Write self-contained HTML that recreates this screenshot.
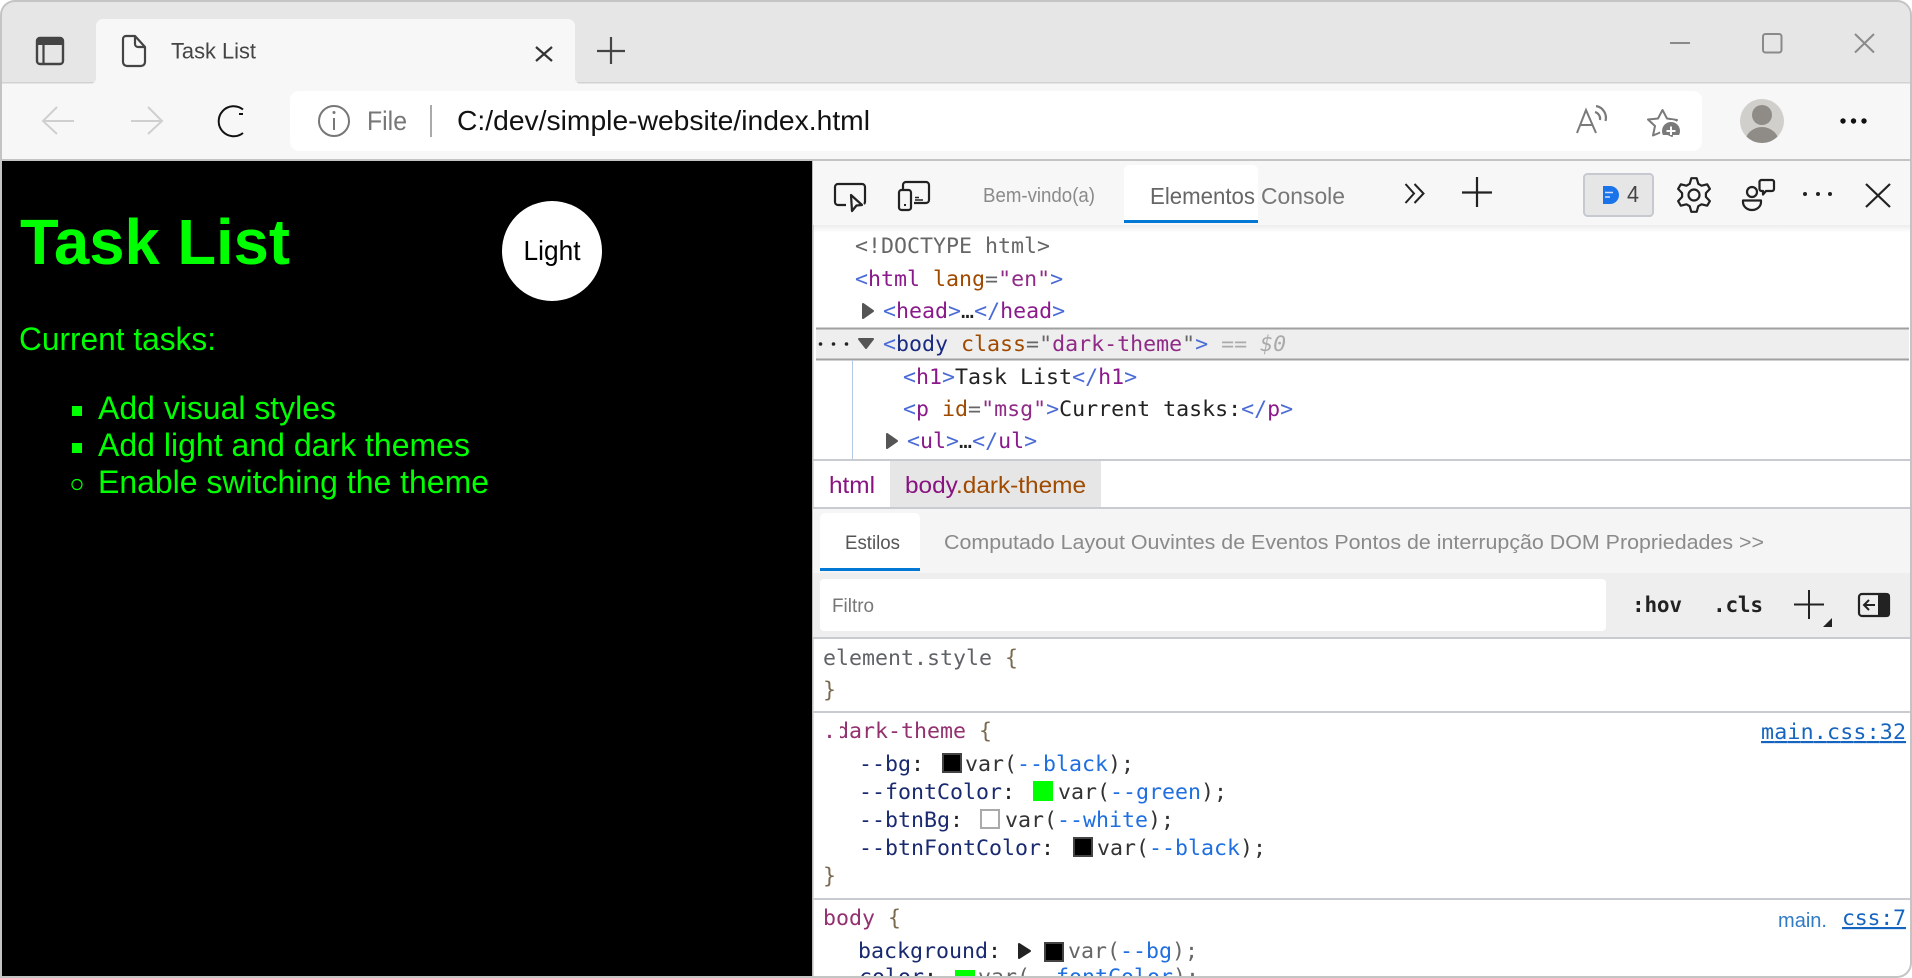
<!DOCTYPE html>
<html lang="en">
<head>
<meta charset="utf-8">
<title>Task List</title>
<style>
html,body{margin:0;padding:0;background:#fff;width:1912px;height:978px;overflow:hidden}
svg{display:block}
text{white-space:pre}
.s{font-family:"Liberation Sans",Arial,sans-serif}
.m{font-family:"DejaVu Sans Mono","Liberation Mono",monospace;font-size:21.6px}
.br{fill:#4a6bd6}.tg{fill:#8a1a8c}.an{fill:#a04a00}.av{fill:#8f2a86}.tx{fill:#222}.gr{fill:#666}
.pn{fill:#1a2a70}.vr{fill:#333}.vb{fill:#1f6fe0}.sl{fill:#93306e}.bc{fill:#7a6a50}
</style>
</head>
<body>
<svg width="1912" height="978" viewBox="0 0 1912 978" xmlns="http://www.w3.org/2000/svg">
<defs>
<clipPath id="win"><path d="M15 1H1897a14 14 0 0 1 14 14V963a14 14 0 0 1-14 14H1V15A14 14 0 0 1 15 1Z"/></clipPath>
<clipPath id="av"><circle cx="1762" cy="121" r="22"/></clipPath>
<clipPath id="panel"><rect x="813" y="712" width="1097" height="264"/></clipPath>
<clipPath id="badge"><rect x="1655" y="115" width="30" height="20"/></clipPath>
<linearGradient id="sh" x1="0" y1="0" x2="0" y2="1"><stop offset="0" stop-color="#000" stop-opacity=".07"/><stop offset="1" stop-color="#000" stop-opacity="0"/></linearGradient>
</defs>
<g clip-path="url(#win)">
<!-- title bar -->
<rect x="0" y="0" width="1912" height="84" fill="#e6e6e6"/>
<rect x="0" y="83" width="1912" height="76" fill="#f7f7f7"/>
<rect x="0" y="82" width="1912" height="1.5" fill="#d2d2d2"/>
<rect x="0" y="159" width="1912" height="2" fill="#c4c4c4"/>
<!-- tab -->
<path d="M90 84a6 6 0 0 0 6-6V26a7 7 0 0 1 7-7H568a7 7 0 0 1 7 7V78a6 6 0 0 0 6 6Z" fill="#f7f7f7"/>
<!-- sidebar icon -->
<rect x="37" y="38" width="26" height="26" rx="3" fill="none" stroke="#444" stroke-width="2.4"/>
<rect x="37" y="38" width="26" height="7" fill="#444"/>
<path d="M43.5 44V64" stroke="#444" stroke-width="2.2"/>
<!-- doc icon -->
<path d="M126 36H135L145 47V62a4 4 0 0 1-4 4H127a4 4 0 0 1-4-4V39a3 3 0 0 1 3-3ZM135 36V44a3 3 0 0 0 3 3H145" fill="none" stroke="#444" stroke-width="2.2" stroke-linejoin="round"/>
<text class="s" x="171" y="58.500" font-size="22.500" fill="#444" textLength="85" lengthAdjust="spacingAndGlyphs">Task List</text>
<path d="M536 47L552 61M552 47L536 61" stroke="#333" stroke-width="2.2"/>
<path d="M611 37V64M597 51H625" stroke="#444" stroke-width="2.2"/>
<!-- window controls -->
<path d="M1670 43H1690" stroke="#8a8a8a" stroke-width="2"/>
<rect x="1763" y="34" width="18.5" height="18.5" rx="2.5" fill="none" stroke="#8a8a8a" stroke-width="2"/>
<path d="M1855 34L1874 52.5M1874 34L1855 52.5" stroke="#8a8a8a" stroke-width="2"/>
<!-- nav -->
<path d="M74 121H43M57 107L43 121L57 134" fill="none" stroke="#cfcfcf" stroke-width="2"/>
<path d="M131 121H162M148 107L162 121L148 134" fill="none" stroke="#cfcfcf" stroke-width="2"/>
<path d="M243 109.5A15 15 0 1 0 243 133" fill="none" stroke="#111" stroke-width="2"/>
<rect x="239" y="113" width="4" height="2" fill="#111"/>
<!-- address bar -->
<rect x="290" y="91" width="1412" height="60" rx="9" fill="#fff"/>
<circle cx="334" cy="121" r="15" fill="none" stroke="#777" stroke-width="2"/>
<circle cx="334" cy="112.5" r="1.5" fill="#777"/>
<path d="M334 118V130" stroke="#777" stroke-width="2"/>
<text class="s" x="367" y="130" font-size="27" fill="#777" textLength="40" lengthAdjust="spacingAndGlyphs">File</text>
<rect x="430" y="105" width="2" height="32" fill="#aaa"/>
<text class="s" x="457" y="130" font-size="27.500" fill="#111" textLength="413" lengthAdjust="spacingAndGlyphs">C:/dev/simple-website/index.html</text>
<!-- read aloud -->
<path d="M1577 133L1586 110L1596 133M1580.5 125H1592.5" fill="none" stroke="#7a7a7a" stroke-width="2"/>
<path d="M1595 112a7 7 0 0 1 5 8M1596 106a12 12 0 0 1 9.500 15" fill="none" stroke="#7a7a7a" stroke-width="2.200"/>
<!-- favorites -->
<path d="M1662.500 110L1667 118.500L1677 120L1670 127L1672 136L1662.500 131.500L1653 135.500L1655 126L1648 119.500L1658 118.500Z" fill="none" stroke="#7a7a7a" stroke-width="2" stroke-linejoin="round"/>
<g clip-path="url(#badge)">
<circle cx="1671" cy="131" r="11" fill="#fff"/>
<circle cx="1671" cy="131" r="9" fill="#7a7a7a"/>
<path d="M1671 126.500V135M1666.500 131H1675.500" stroke="#fff" stroke-width="2"/>
</g>
<!-- avatar -->
<circle cx="1762" cy="121" r="22" fill="#d0cfcb"/>
<g clip-path="url(#av)"><circle cx="1762" cy="115" r="10" fill="#8f8b86"/><ellipse cx="1762" cy="143" rx="17" ry="16" fill="#8f8b86"/></g>
<circle cx="1843" cy="121" r="2.700" fill="#111"/><circle cx="1853.500" cy="121" r="2.700" fill="#111"/><circle cx="1864" cy="121" r="2.700" fill="#111"/>

<!-- page -->
<rect x="0" y="161" width="812" height="817" fill="#000"/>
<text class="s" x="20" y="264" font-size="64" font-weight="700" fill="#0f0" textLength="270" lengthAdjust="spacingAndGlyphs">Task List</text>
<circle cx="552" cy="251" r="50" fill="#fff"/>
<text class="s" x="523.500" y="260" font-size="27.500" fill="#000" textLength="57" lengthAdjust="spacingAndGlyphs">Light</text>
<text class="s" x="19" y="350" font-size="32" fill="#0f0" textLength="197" lengthAdjust="spacingAndGlyphs">Current tasks:</text>
<rect x="72" y="406" width="10" height="10" fill="#0f0"/>
<rect x="72" y="443" width="10" height="10" fill="#0f0"/>
<circle cx="77" cy="484.500" r="5" fill="none" stroke="#0f0" stroke-width="1.200"/>
<text class="s" x="98" y="419" font-size="32" fill="#0f0" textLength="238" lengthAdjust="spacingAndGlyphs">Add visual styles</text>
<text class="s" x="98" y="456" font-size="32" fill="#0f0" textLength="372" lengthAdjust="spacingAndGlyphs">Add light and dark themes</text>
<text class="s" x="98" y="493" font-size="32" fill="#0f0" textLength="391" lengthAdjust="spacingAndGlyphs">Enable switching the theme</text>

<!-- devtools -->
<rect x="812" y="161" width="1100" height="817" fill="#fff"/>
<rect x="812" y="161" width="1.500" height="817" fill="#bbb"/>
<rect x="813" y="161" width="1097" height="64" fill="#f7f7f7"/>
<rect x="813" y="225" width="1097" height="8" fill="url(#sh)"/>
<!-- inspect -->
<path d="M846 205H838a3 3 0 0 1-3-3V187a3 3 0 0 1 3-3H862a3 3 0 0 1 3 3V202a3 3 0 0 1-1 2" fill="none" stroke="#222" stroke-width="2.200"/>
<path d="M851 195L862 205L856.500 205.500L852 211Z" fill="#f7f7f7" stroke="#222" stroke-width="2.200" stroke-linejoin="round"/>
<!-- device -->
<path d="M903 189V185a3 3 0 0 1 3-3H926a3 3 0 0 1 3 3V200a3 3 0 0 1-3 3H914" fill="none" stroke="#222" stroke-width="2.200"/>
<rect x="899" y="190" width="12" height="20" rx="2.500" fill="#f7f7f7" stroke="#222" stroke-width="2.200"/>
<path d="M904 205H906" stroke="#222" stroke-width="2"/>
<path d="M915 197.500H919M915 200H923" stroke="#222" stroke-width="1.500"/>
<text class="s" x="983" y="202" font-size="20" fill="#8a8a8a" textLength="112" lengthAdjust="spacingAndGlyphs">Bem-vindo(a)</text>
<path d="M1124 223V170a5 5 0 0 1 5-5H1253a5 5 0 0 1 5 5V223Z" fill="#fff"/>
<rect x="1124" y="220" width="134" height="3" fill="#0078d4"/>
<text class="s" x="1150" y="204" font-size="23.500" fill="#666" textLength="105" lengthAdjust="spacingAndGlyphs">Elementos</text>
<text class="s" x="1261" y="204" font-size="23.500" fill="#777" textLength="84" lengthAdjust="spacingAndGlyphs">Console</text>
<path d="M1405.500 184L1414 193.500L1405.500 203M1414.500 184L1423.500 193.500L1414.500 203" fill="none" stroke="#222" stroke-width="2"/>
<path d="M1477 177V207M1462 192.500H1492" stroke="#222" stroke-width="2.200"/>
<rect x="1584" y="174" width="69" height="42" rx="3.500" fill="#e6e6e6" stroke="#c6cad0" stroke-width="2"/>
<path d="M1603 186H1610a9 9 0 0 1 0 18H1603Z" fill="#1a73e8"/>
<path d="M1605 192.500H1613M1605 197H1610" stroke="#cfe0fa" stroke-width="1.500"/>
<text class="s" x="1627" y="202" font-size="23" fill="#444" textLength="12" lengthAdjust="spacingAndGlyphs">4</text>
<!-- gear -->
<g transform="translate(1694,195)" fill="none" stroke="#222" stroke-width="2.200" stroke-linejoin="round">
<path d="M-2.660-16.800L2.660-16.800L4.300-11.200L7.550-9.300L13.200-10.700L15.900-6.100L11.900-1.900L11.900 1.900L15.900 6.100L13.200 10.700L7.550 9.300L4.300 11.200L2.660 16.800L-2.660 16.800L-4.300 11.200L-7.550 9.300L-13.200 10.700L-15.900 6.100L-11.900 1.900L-11.900-1.900L-15.900-6.100L-13.200-10.700L-7.550-9.300L-4.300-11.200Z"/>
<circle r="5.500"/>
</g>
<!-- feedback -->
<circle cx="1752" cy="192" r="5" fill="none" stroke="#222" stroke-width="2.200"/>
<path d="M1743 200.500H1761V202a9 8 0 0 1-18 0Z" fill="none" stroke="#222" stroke-width="2.200" stroke-linejoin="round"/>
<path d="M1761 180H1772a2 2 0 0 1 2 2V189a2 2 0 0 1-2 2H1766L1763 194.500V191H1761.500a2 2 0 0 1-2-2V182a2 2 0 0 1 2-2Z" fill="none" stroke="#222" stroke-width="2.200" stroke-linejoin="round"/>
<circle cx="1805" cy="194" r="2" fill="#222"/><circle cx="1818" cy="194" r="2" fill="#222"/><circle cx="1830" cy="194" r="2" fill="#222"/>
<path d="M1866 184L1890 207M1890 184L1866 207" stroke="#222" stroke-width="2.200"/>

<!-- DOM -->
<text class="m gr" x="855" y="253" >&lt;!DOCTYPE html&gt;</text>
<text class="m" x="855" y="286"><tspan class="br">&lt;</tspan><tspan class="tg">html</tspan><tspan class="an"> lang</tspan><tspan class="gr">=</tspan><tspan class="av">"en"</tspan><tspan class="br">&gt;</tspan></text>
<path d="M863 304L873 311L863 318Z" fill="#555" stroke="#555" stroke-width="2" stroke-linejoin="round"/>
<text class="m" x="883" y="318"><tspan class="br">&lt;</tspan><tspan class="tg">head</tspan><tspan class="br">&gt;</tspan><tspan class="tx">…</tspan><tspan class="br">&lt;/</tspan><tspan class="tg">head</tspan><tspan class="br">&gt;</tspan></text>
<rect x="816" y="328" width="1093" height="32" fill="#eee"/>
<rect x="816" y="327.500" width="1093" height="2" fill="#a0a0a0"/>
<rect x="816" y="358.500" width="1093" height="2" fill="#a0a0a0"/>
<circle cx="820.500" cy="344" r="1.800" fill="#222"/><circle cx="833.500" cy="344" r="1.800" fill="#222"/><circle cx="846.500" cy="344" r="1.800" fill="#222"/>
<path d="M859 339H873L866 348Z" fill="#555" stroke="#555" stroke-width="2" stroke-linejoin="round"/>
<text class="m" x="883" y="351"><tspan class="br">&lt;</tspan><tspan fill="#1a2a80">body</tspan><tspan class="an"> class</tspan><tspan class="gr">=</tspan><tspan class="gr">"</tspan><tspan class="av">dark-theme</tspan><tspan class="gr">"</tspan><tspan class="br">&gt;</tspan><tspan fill="#aaa" font-style="italic"> == $0</tspan></text>
<rect x="852" y="360" width="1" height="99" fill="#b4c6ea"/>
<text class="m" x="903" y="384"><tspan class="br">&lt;</tspan><tspan class="tg">h1</tspan><tspan class="br">&gt;</tspan><tspan class="tx">Task List</tspan><tspan class="br">&lt;/</tspan><tspan class="tg">h1</tspan><tspan class="br">&gt;</tspan></text>
<text class="m" x="903" y="416"><tspan class="br">&lt;</tspan><tspan class="tg">p</tspan><tspan class="an"> id</tspan><tspan class="gr">=</tspan><tspan class="av">"msg"</tspan><tspan class="br">&gt;</tspan><tspan class="tx">Current tasks:</tspan><tspan class="br">&lt;/</tspan><tspan class="tg">p</tspan><tspan class="br">&gt;</tspan></text>
<path d="M887 434L897 441L887 448Z" fill="#555" stroke="#555" stroke-width="2" stroke-linejoin="round"/>
<text class="m" x="907" y="448"><tspan class="br">&lt;</tspan><tspan class="tg">ul</tspan><tspan class="br">&gt;</tspan><tspan class="tx">…</tspan><tspan class="br">&lt;/</tspan><tspan class="tg">ul</tspan><tspan class="br">&gt;</tspan></text>
<rect x="813" y="459" width="1097" height="2" fill="#c8ccd0"/>

<!-- breadcrumb -->
<rect x="890" y="461" width="211" height="46" fill="#e6e6e6"/>
<text class="s" x="829" y="493" font-size="23" fill="#881280" textLength="46" lengthAdjust="spacingAndGlyphs">html</text>
<text class="s" x="905" y="493" font-size="23" textLength="181" lengthAdjust="spacingAndGlyphs"><tspan fill="#881280">body</tspan><tspan fill="#a04a00">.dark-theme</tspan></text>
<rect x="813" y="507" width="1097" height="2" fill="#c8ccd0"/>

<!-- styles tabs -->
<rect x="813" y="509" width="1097" height="64" fill="#f5f5f5"/>
<path d="M820 571V518a5 5 0 0 1 5-5H915a5 5 0 0 1 5 5V571Z" fill="#fff"/>
<rect x="820" y="568" width="100" height="3" fill="#0078d4"/>
<text class="s" x="845" y="549" font-size="19" fill="#555" textLength="55" lengthAdjust="spacingAndGlyphs">Estilos</text>
<text class="s" x="944" y="549" font-size="20" fill="#8a8a8a" textLength="820" lengthAdjust="spacingAndGlyphs">Computado Layout Ouvintes de Eventos Pontos de interrupção DOM Propriedades &gt;&gt;</text>
<!-- filter -->
<rect x="813" y="573" width="1097" height="64" fill="#eee"/>
<rect x="820" y="579" width="786" height="52" rx="4" fill="#fff"/>
<text class="s" x="832" y="612" font-size="19.500" fill="#777" textLength="42" lengthAdjust="spacingAndGlyphs">Filtro</text>
<text x="1632" y="612" font-family="'DejaVu Sans Mono','Liberation Mono',monospace" font-size="21" font-weight="700" fill="#222" textLength="50">:hov</text>
<text x="1713" y="612" font-family="'DejaVu Sans Mono','Liberation Mono',monospace" font-size="21" font-weight="700" fill="#222" textLength="50">.cls</text>
<path d="M1809 590V619M1794 604.500H1824" stroke="#222" stroke-width="2"/>
<path d="M1832 618V627H1823Z" fill="#222"/>
<rect x="1859" y="594" width="30" height="22" rx="3" fill="#eee" stroke="#222" stroke-width="2.200"/>
<path d="M1878 593H1887a3 3 0 0 1 3 3V614a3 3 0 0 1-3 3H1878Z" fill="#222"/>
<path d="M1875 605H1864M1869 600L1864 605L1869 610" fill="none" stroke="#222" stroke-width="2"/>
<rect x="813" y="637" width="1097" height="2" fill="#c8ccd0"/>

<!-- styles -->
<text class="m" x="823" y="665" fill="#5f6368">element.style <tspan class="bc">{</tspan></text>
<text class="m bc" x="823" y="697">}</text>
<rect x="813" y="711" width="1097" height="2" fill="#c8ccd0"/>
<text class="m sl" x="823" y="738">.dark-theme <tspan class="bc">{</tspan></text>
<rect x="834" y="722" width="6" height="17" fill="#fff"/>
<text x="1761" y="739" class="m" fill="#1565c0" text-decoration="underline" textLength="145">main.css:32</text>

<text class="m" x="859" y="771"><tspan class="pn">--bg</tspan><tspan class="tx">: </tspan></text>
<rect x="943" y="754" width="18" height="18" fill="#000" stroke="#444" stroke-width="2"/>
<text class="m" x="965" y="771"><tspan class="vr">var(</tspan><tspan class="vb">--black</tspan><tspan class="vr">);</tspan></text>

<text class="m" x="859" y="799"><tspan class="pn">--fontColor</tspan><tspan class="tx">: </tspan></text>
<rect x="1033" y="781" width="20" height="20" fill="#0f0"/>
<text class="m" x="1058" y="799"><tspan class="vr">var(</tspan><tspan class="vb">--green</tspan><tspan class="vr">);</tspan></text>

<text class="m" x="859" y="827"><tspan class="pn">--btnBg</tspan><tspan class="tx">: </tspan></text>
<rect x="981" y="810" width="18" height="18" fill="#fff" stroke="#aaa" stroke-width="2"/>
<text class="m" x="1005" y="827"><tspan class="vr">var(</tspan><tspan class="vb">--white</tspan><tspan class="vr">);</tspan></text>

<text class="m" x="859" y="855"><tspan class="pn">--btnFontColor</tspan><tspan class="tx">: </tspan></text>
<rect x="1074" y="838" width="18" height="18" fill="#000" stroke="#444" stroke-width="2"/>
<text class="m" x="1097" y="855"><tspan class="vr">var(</tspan><tspan class="vb">--black</tspan><tspan class="vr">);</tspan></text>

<text class="m bc" x="823" y="883">}</text>
<rect x="813" y="898" width="1097" height="2" fill="#c8ccd0"/>
<text class="m sl" x="823" y="925">body <tspan class="bc">{</tspan></text>
<text class="s" x="1778" y="927" font-size="20" fill="#2f7bc4" textLength="49" lengthAdjust="spacingAndGlyphs">main.</text>
<text class="m" x="1842" y="925" fill="#1565c0" text-decoration="underline" textLength="64">css:7</text>
<g clip-path="url(#panel)">
<text class="m" x="858" y="958"><tspan class="pn">background</tspan><tspan class="tx">: </tspan></text>
<path d="M1019 944L1030 951L1019 958Z" fill="#222" stroke="#222" stroke-width="2" stroke-linejoin="round"/>
<rect x="1045" y="943" width="18" height="18" fill="#000" stroke="#444" stroke-width="2"/>
<text class="m" x="1068" y="958"><tspan class="gr">var(</tspan><tspan class="vb">--bg</tspan><tspan class="gr">);</tspan></text>
<text class="m" x="859" y="984"><tspan class="pn">color</tspan><tspan class="tx">: </tspan></text>
<rect x="955" y="970" width="20" height="20" fill="#0f0"/>
<text class="m" x="978" y="984"><tspan class="gr">var(</tspan><tspan class="vb">--fontColor</tspan><tspan class="gr">);</tspan></text>
</g>
</g>
<path d="M15 1H1897a14 14 0 0 1 14 14V963a14 14 0 0 1-14 14H1V15A14 14 0 0 1 15 1Z" fill="none" stroke="#c4c4c4" stroke-width="2"/>
</svg>
</body>
</html>
